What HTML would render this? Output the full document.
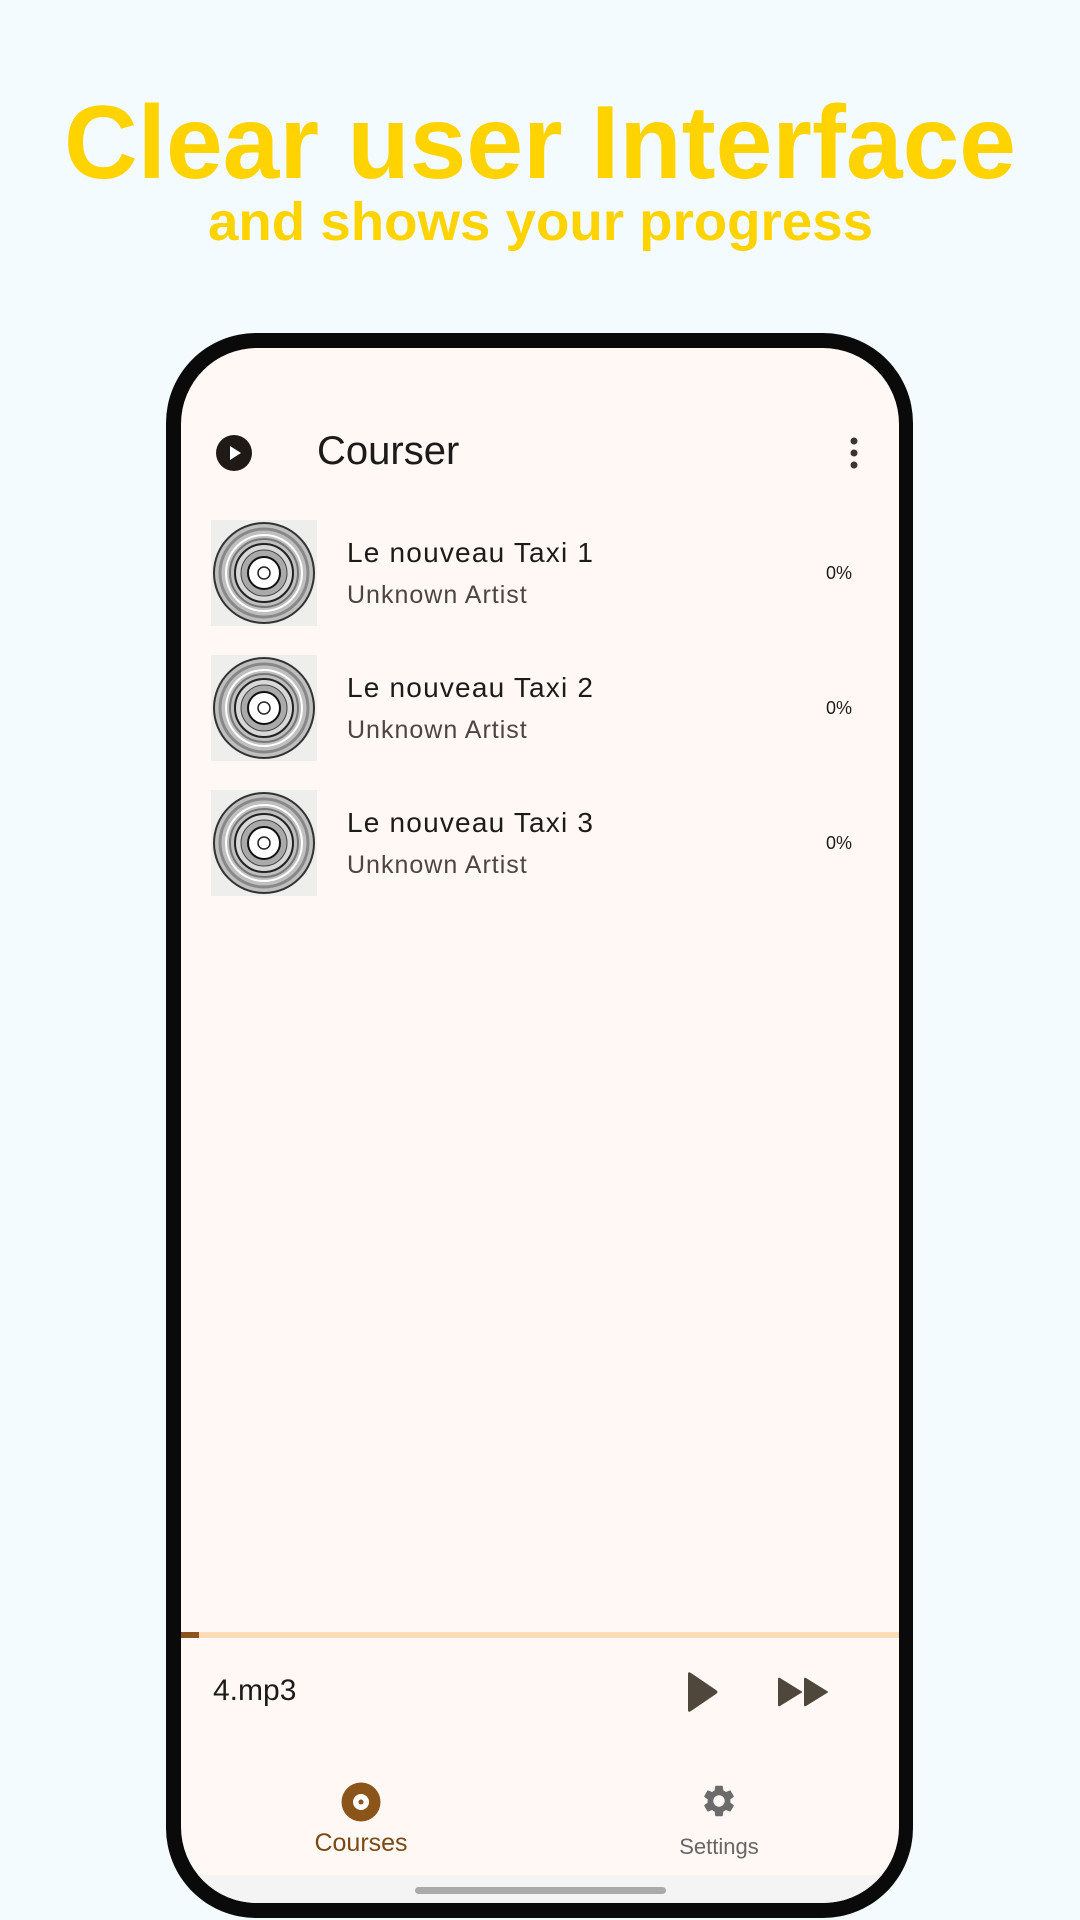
<!DOCTYPE html>
<html><head><meta charset="utf-8"><style>
*{margin:0;padding:0;box-sizing:border-box}
body{width:1080px;height:1920px;background:#F3FBFE;position:relative;overflow:hidden;font-family:"Liberation Sans",sans-serif}
.abs{position:absolute}
.phone{left:166px;top:333px;width:747px;height:1585px;background:#0a0a0a;border-radius:90px}
.screen{left:181px;top:348px;width:718px;height:1555px;background:#FFF8F5;border-radius:76px;overflow:hidden}
.t{white-space:nowrap}
</style></head><body>
<svg class="abs" style="left:0;top:0" width="1080" height="280">
<text x="64" y="178" textLength="952" lengthAdjust="spacingAndGlyphs" font-family="Liberation Sans" font-weight="bold" font-size="104" fill="#FFD300">Clear user Interface</text>
<text x="208" y="240" textLength="665" lengthAdjust="spacingAndGlyphs" font-family="Liberation Sans" font-weight="bold" font-size="54" fill="#FFD300">and shows your progress</text>
</svg>
<div class="abs phone"></div>
<div class="abs screen">
<div class="abs" style="left:0;top:1527px;width:718px;height:28px;background:#F4F4F4"></div>
<div class="abs" style="left:234px;top:1539px;width:251px;height:7px;border-radius:4px;background:#aaa"></div>
</div>
<!-- app bar -->
<svg class="abs" style="left:215px;top:434px" width="38" height="38"><circle cx="19" cy="19" r="18" fill="#201a17"/><path d="M15 12 L26 19 L15 26Z" fill="#fff"/></svg>
<div class="abs t" style="left:317px;top:429px;font-size:40px;color:#1d1b1a">Courser</div>
<svg class="abs" style="left:849px;top:436px" width="10" height="34"><circle cx="5" cy="5" r="3.5" fill="#3a332e"/><circle cx="5" cy="17" r="3.5" fill="#3a332e"/><circle cx="5" cy="29" r="3.5" fill="#3a332e"/></svg>
<div id="items"></div>
<script>
var h='';
for(var i=0;i<3;i++){var y=520+i*135;
h+='<svg class="abs" style="left:211px;top:'+y+'px" width="106" height="106"><rect width="106" height="106" fill="#eeeeec"/><circle cx="53" cy="53" r="51" fill="#333"/><circle cx="53" cy="53" r="49" fill="#bfbfbf"/><circle cx="53" cy="53" r="44" fill="none" stroke="#888" stroke-width="3"/><circle cx="53" cy="53" r="38" fill="none" stroke="#fff" stroke-width="2"/><circle cx="53" cy="53" r="34" fill="none" stroke="#777" stroke-width="2"/><circle cx="53" cy="53" r="29" fill="#d8d8d8" stroke="#222" stroke-width="2"/><circle cx="53" cy="53" r="23" fill="#aaa" stroke="#444" stroke-width="1"/><circle cx="53" cy="53" r="16" fill="#fff" stroke="#111" stroke-width="2"/><circle cx="53" cy="53" r="6" fill="#fff" stroke="#222" stroke-width="1.5"/></svg>'+
'<div class="abs t" style="left:347px;top:'+(y+17)+'px;font-size:28px;letter-spacing:1.2px;color:#1d1b1a">Le nouveau Taxi '+(i+1)+'</div>'+
'<div class="abs t" style="left:347px;top:'+(y+61)+'px;font-size:25px;letter-spacing:1px;color:#4d4540">Unknown Artist</div>'+
'<div class="abs t" style="left:826px;top:'+(y+43)+'px;font-size:18px;color:#1d1b1a">0%</div>';}
document.getElementById('items').innerHTML=h;
</script>
<div class="abs" style="left:181px;top:1632px;width:718px;height:6px;background:#FFDBB8"></div>
<div class="abs" style="left:181px;top:1632px;width:18px;height:6px;background:#8B5520"></div>
<div class="abs t" style="left:213px;top:1674px;font-size:30px;color:#1d1b1a">4.mp3</div>
<svg class="abs" style="left:684px;top:1670px" width="36" height="44"><path d="M4 4 Q4 1 7 3 L32 20 Q35 22 32 24 L7 41 Q4 43 4 40Z" fill="#4f463c"/></svg>
<svg class="abs" style="left:776px;top:1676px" width="56" height="32"><path d="M2 3 Q2 1 4 2 L25 15 Q27 16 25 17 L4 30 Q2 31 2 29Z M28 3 Q28 1 30 2 L51 15 Q53 16 51 17 L30 30 Q28 31 28 29Z" fill="#4f463c"/></svg>
<svg class="abs" style="left:341px;top:1782px" width="40" height="40"><circle cx="20" cy="20" r="19.5" fill="#8B5418"/><circle cx="20" cy="20" r="8" fill="#fff"/><circle cx="20" cy="20" r="2.5" fill="#8B5418"/></svg>
<div class="abs t" style="left:311px;top:1829px;width:100px;text-align:center;font-size:25px;color:#7a4a12">Courses</div>
<svg class="abs" style="left:700px;top:1782px" width="38" height="38" viewBox="0 0 24 24"><path fill="#6b6b6b" d="M19.14 12.94c.04-.3.06-.61.06-.94 0-.32-.02-.64-.07-.94l2.030-1.58c.18-.14.23-.41.12-.61l-1.92-3.32c-.12-.22-.37-.29-.59-.22l-2.39.96c-.5-.38-1.03-.7-1.62-.94l-.36-2.54c-.04-.24-.24-.41-.48-.41h-3.84c-.24 0-.43.17-.47.41l-.36 2.54c-.59.24-1.130.57-1.62.94l-2.39-.96c-.22-.08-.47 0-.59.22L2.74 8.87c-.12.21-.08.47.12.61l2.03 1.58c-.05.3-.09.63-.09.94s.02.64.07.94l-2.03 1.58c-.18.14-.23.41-.12.61l1.92 3.32c.12.22.37.29.59.22l2.39-.96c.5.38 1.03.7 1.62.94l.36 2.54c.05.24.24.41.48.41h3.84c.24 0 .44-.17.47-.41l.36-2.54c.59-.24 1.13-.56 1.62-.94l2.39.96c.22.08.47 0 .59-.22l1.92-3.32c.12-.22.07-.47-.12-.61l-2.01-1.58zM12 15.6c-1.98 0-3.6-1.62-3.6-3.6s1.62-3.6 3.6-3.6 3.6 1.62 3.6 3.6-1.62 3.6-3.6 3.6z"/></svg>
<div class="abs t" style="left:669px;top:1834px;width:100px;text-align:center;font-size:22px;color:#666">Settings</div>
</body></html>
